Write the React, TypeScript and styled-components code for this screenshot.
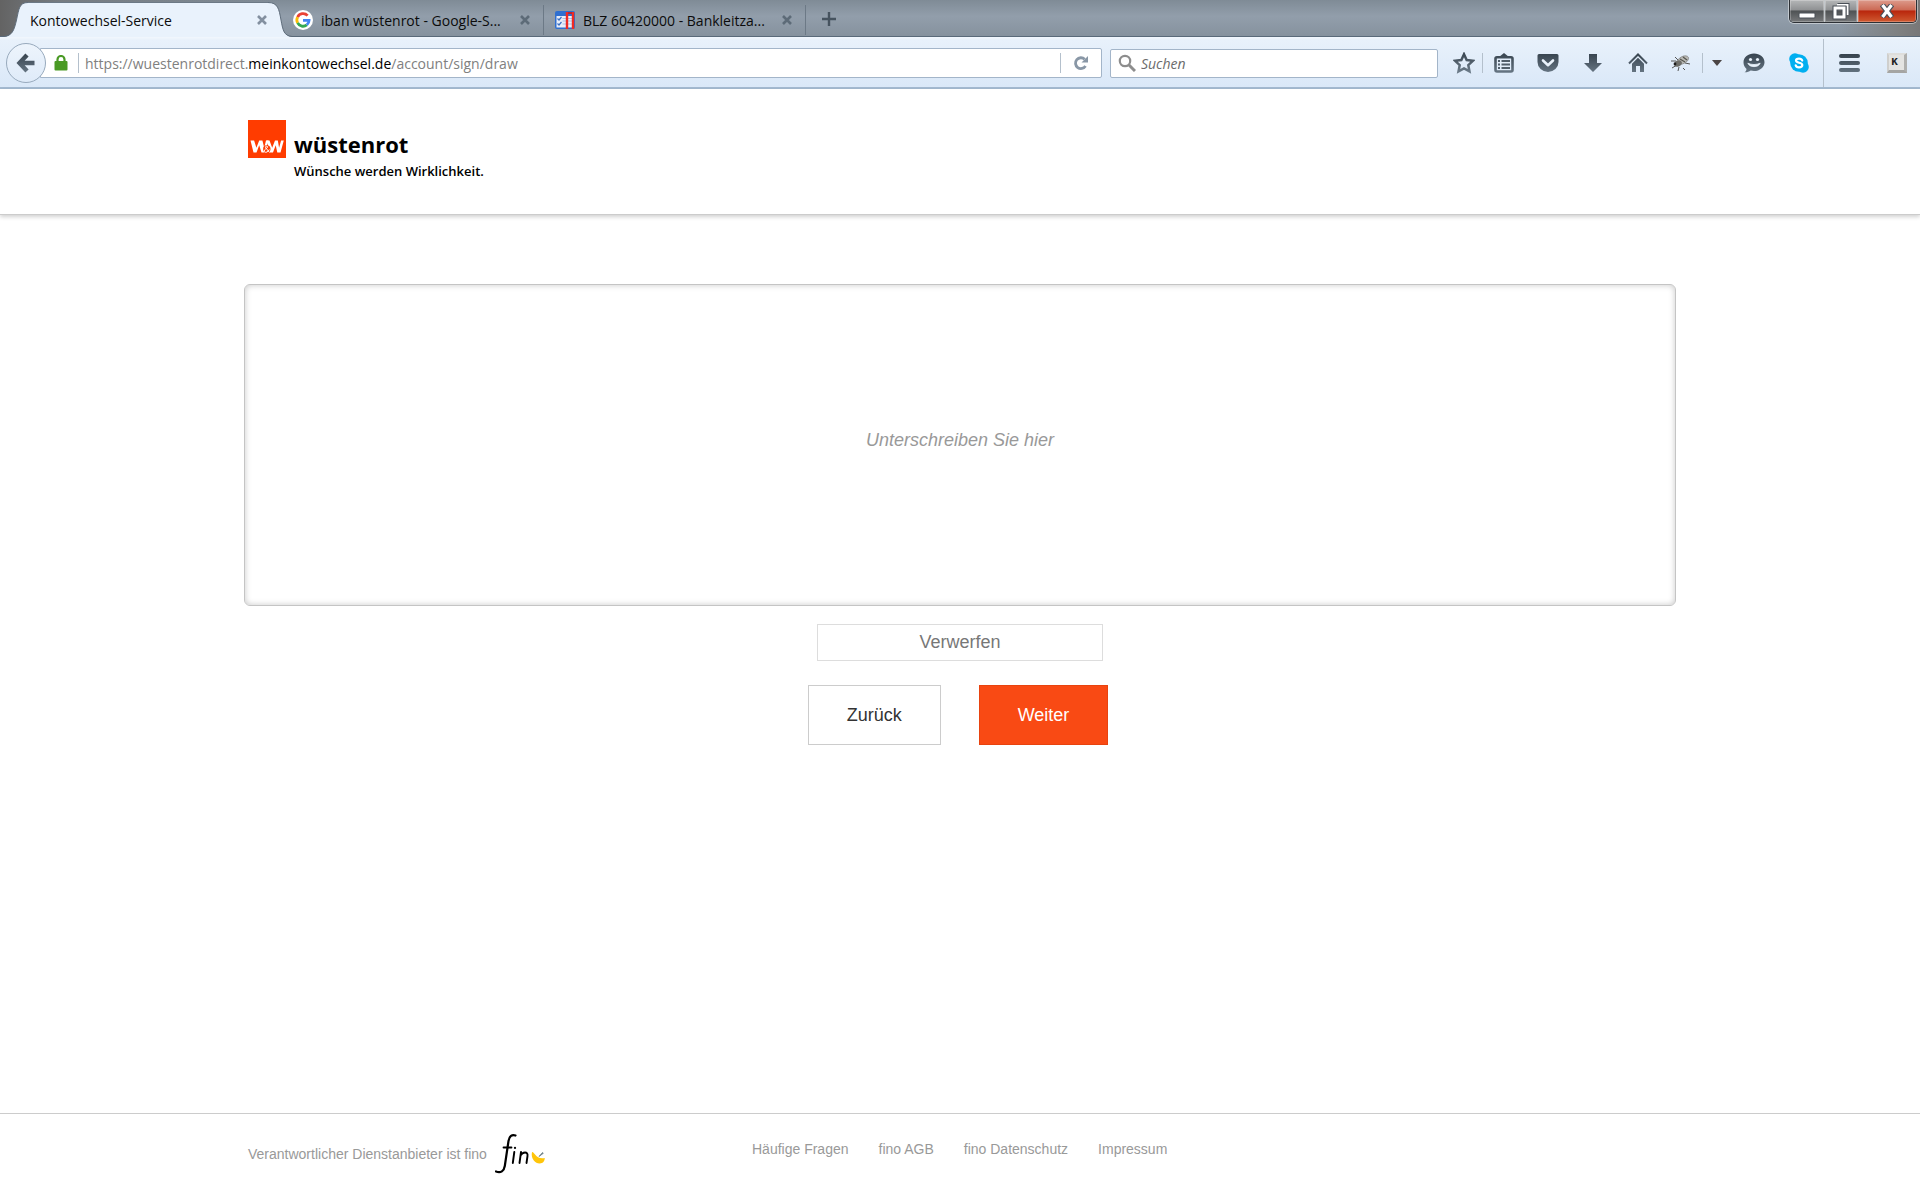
import React from "react";
import styled, { createGlobalStyle } from "styled-components";

const ui = `"Open Sans", "Noto Sans", sans-serif`;
const arial = `"Liberation Sans", Arial, sans-serif`;

const GlobalStyle = createGlobalStyle`
  *, *::before, *::after { box-sizing: border-box; }
  body { margin: 0; background: #fff; font-family: ${arial}; }
  button { font-family: inherit; cursor: pointer; }
`;

const Screen = styled.div`
  display: flex;
  flex-direction: column;
  min-height: 100vh;
`;

/* ---------- browser chrome ---------- */

const TabStrip = styled.div`
  display: flex;
  align-items: flex-end;
  height: 37px;
  padding-left: 4px;
  border-bottom: 1px solid #5a6a7a;
  background:
    linear-gradient(90deg, #636363 0, rgba(110, 112, 114, 0.6) 60px, transparent 280px),
    linear-gradient(270deg, #787777 0, #7f8080 20px, transparent 80px),
    linear-gradient(#7f8b96, #929eab 45%, #86929e);
`;

const Tab = styled.div`
  display: flex;
  flex: 0 1 262px;
  align-items: center;
  gap: 8px;
  min-width: 0;
  height: 30px;
  margin-bottom: 1px;
  padding: 0 12px 0 11px;
  border-right: 1px solid #6c7986;
`;

const ActiveTab = styled.div`
  position: relative;
  z-index: 1;
  display: flex;
  flex: 0 1 288px;
  height: 35px;
  margin: 0 -10px -1px 0;
`;

const TabEdge = styled.svg`
  flex: none;
  width: 24px;
  height: 35px;
`;

const TabBody = styled.div`
  display: flex;
  flex: 1;
  align-items: center;
  min-width: 0;
  padding-left: 2px;
  border-top: 1px solid #6c7986;
  background: #e9f2fc;
`;

const TabTitle = styled.span`
  flex: 1;
  overflow: hidden;
  padding-top: 2px;
  color: #0b0b0b;
  font: 14px/20px ${ui};
  text-overflow: ellipsis;
  white-space: nowrap;
`;

const PlainButton = styled.button`
  display: flex;
  flex: none;
  align-items: center;
  justify-content: center;
  padding: 0;
  border: 0;
  background: none;
`;

const NewTab = styled(PlainButton)`
  width: 46px;
  height: 34px;
`;

const WindowControls = styled.div`
  display: flex;
  align-self: flex-start;
  height: 23px;
  margin: 0 3px 0 auto;
  overflow: hidden;
  border: 1px solid #2c3035;
  border-top: 0;
  border-radius: 0 0 5px 5px;
  box-shadow: 0 0 0 1px rgba(255, 255, 255, 0.45);
`;

const WindowButton = styled(PlainButton)<{ $w: number; $close?: boolean }>`
  width: ${(p) => p.$w}px;
  border-right: ${(p) => (p.$close ? "0" : "1px solid #c3c8cc")};
  background: ${(p) =>
    p.$close
      ? "linear-gradient(#dd9b8c, #cc6a55 45%, #b9260c 50%, #cf5a31)"
      : "linear-gradient(#b5b7b8, #8f9193 45%, #4f5254 50%, #77797b)"};
  box-shadow: inset 0 0 0 1px rgba(255, 255, 255, 0.25);
`;

const Toolbar = styled.div`
  display: flex;
  align-items: center;
  height: 52px;
  padding: 2px 0 0 6px;
  border-bottom: 2px solid #a4bad1;
  background: linear-gradient(#f2f7fd, #e8f1fb 3px, #dae8f8);
`;

const BackButton = styled(PlainButton)`
  z-index: 1;
  width: 40px;
  height: 40px;
  border: 1px solid #98aabd;
  border-radius: 50%;
  background: linear-gradient(#edf4fc, #dfebf9);
`;

const AddressBar = styled.div`
  display: flex;
  flex: 1;
  align-items: center;
  min-width: 0;
  height: 30px;
  margin-left: -6px;
  padding-left: 13px;
  border: 1px solid #a3b5c9;
  border-radius: 0 2px 2px 0;
  background: #fff;
`;

const Address = styled.div`
  flex: 1;
  overflow: hidden;
  padding: 1px 0 0 6px;
  color: #808080;
  font: 14px/20px ${ui};
  white-space: nowrap;
  outline: 0;
`;

const Domain = styled.span`
  color: #000;
`;

const Divider = styled.span<{ $h?: number; $left?: number }>`
  flex: none;
  width: 1px;
  height: ${(p) => p.$h ?? 20}px;
  margin-left: ${(p) => p.$left ?? 0}px;
  background: #b4c0cc;
`;

const SearchBox = styled.label`
  display: flex;
  flex: 0 1 328px;
  align-items: center;
  gap: 5px;
  height: 29px;
  margin: 0 7px 0 8px;
  padding: 0 7px;
  border: 1px solid #a3b5c9;
  border-radius: 2px;
  background: #fff;
`;

const SearchInput = styled.input`
  flex: 1;
  min-width: 0;
  padding: 1px 0 0;
  border: 0;
  outline: 0;
  background: none;
  font: 14px/20px ${ui};
  &::placeholder {
    color: #6b6b6b;
    font-style: italic;
    opacity: 1;
  }
`;

const ToolButton = styled(PlainButton)<{ $w?: number }>`
  width: ${(p) => p.$w ?? 45}px;
  height: 32px;
`;

/* ---------- page ---------- */

const Container = styled.div`
  width: 100%;
  max-width: 1432px;
  margin: 0 auto;
`;

const SiteHeader = styled.header`
  padding: 31px 0 32px;
  border-bottom: 1px solid #ccc;
  box-shadow: 0 2px 4px rgba(0, 0, 0, 0.18);
`;

const Brand = styled.a`
  display: inline-flex;
  gap: 8px;
  padding-left: 4px;
  color: #000;
  text-decoration: none;
`;

const BrandText = styled.span`
  display: flex;
  flex-direction: column;
  padding-top: 8px;
`;

const BrandName = styled.span`
  font: 700 22px/32px ${ui};
`;

const BrandClaim = styled.span`
  font: 600 13px/22px ${ui};
`;

const Main = styled.main`
  flex: 1;
  padding: 69px 0 40px;
`;

const SignForm = styled.form`
  display: flex;
  flex-direction: column;
  align-items: center;
`;

const SignaturePad = styled.div`
  display: flex;
  align-items: center;
  justify-content: center;
  width: 100%;
  height: 322px;
  padding-bottom: 10px;
  border: 1px solid #c4c4c4;
  border-radius: 6px;
  box-shadow: inset 0 0 6px rgba(0, 0, 0, 0.22);
  color: #999;
  font-size: 18px;
  font-style: italic;
`;

const DiscardButton = styled.button`
  width: 20%;
  height: 37px;
  margin: 18px 0 24px;
  padding: 0;
  border: 1px solid #ddd;
  background: #fff;
  color: #777;
  font-size: 18px;
`;

const Actions = styled.div`
  display: flex;
  gap: 38px;
  padding-right: 4px;
`;

const ActionButton = styled.button<{ $primary?: boolean }>`
  height: 60px;
  padding: 0 38px;
  border: 1px solid ${(p) => (p.$primary ? "#e8430f" : "#ccc")};
  background: ${(p) => (p.$primary ? "#f94a14" : "#fff")};
  color: ${(p) => (p.$primary ? "#fff" : "#333")};
  font-size: 18px;
`;

const SiteFooter = styled.footer`
  min-height: 87px;
  padding-top: 20px;
  border-top: 1px solid #ccc;
  color: #999;
  font-size: 14px;
  line-height: 20px;
`;

const FooterGrid = styled(Container)`
  display: grid;
  grid-template-columns: 504px 1fr;
  align-items: start;
  padding-left: 4px;
`;

const Provider = styled.div`
  display: flex;
  align-items: center;
  gap: 8px;
`;

const FooterNav = styled.nav`
  display: flex;
  gap: 30px;
  padding-top: 5px;
`;

const FooterLink = styled.a`
  color: inherit;
  text-decoration: none;
`;

/* ---------- drawings ---------- */

const CloseIcon = ({ color = "#5d6b78" }: { color?: string }) => (
  <svg width="12" height="12" viewBox="0 0 12 12" stroke={color} strokeWidth="2.6">
    <path d="M2 2l8 8M10 2l-8 8" />
  </svg>
);

const Shade = ({ id }: { id: string }) => (
  <defs>
    <linearGradient id={id} x1="0" y1="0" x2="0" y2="24" gradientUnits="userSpaceOnUse">
      <stop offset="0" stopColor="#36424d" />
      <stop offset="1" stopColor="#71818f" />
    </linearGradient>
  </defs>
);

const GoogleIcon = () => (
  <svg width="20" height="20" viewBox="0 0 20 20">
    <circle cx="10" cy="10" r="10" fill="#fff" />
    <g fill="none" strokeWidth="2.8">
      <path d="M14.6 5.6A6.1 6.1 0 0 0 4.6 7.1" stroke="#ea4335" />
      <path d="M4.6 7.1a6.1 6.1 0 0 0 0 5.8" stroke="#fbbc05" />
      <path d="M4.6 12.9a6.1 6.1 0 0 0 9.2 2" stroke="#34a853" />
      <path d="M13.8 14.9a6.1 6.1 0 0 0 2.3-4.6H10" stroke="#4285f4" />
    </g>
  </svg>
);

const BankIcon = () => (
  <svg width="20" height="20" viewBox="0 0 20 20">
    <rect x="0" y="1" width="20" height="18" rx="2" fill="#2f6fd0" />
    <rect x="1.5" y="6" width="17" height="11.5" fill="#e9eef8" />
    <path d="M2.500 8.500l1.500 1.500L6.500 7M2.500 13.500l1.500 1.500L6.500 12" fill="none" stroke="#3b6fc2" strokeWidth="1.2" />
    <path d="M7.500 8.500H17M7.500 11H17M7.500 14H17" stroke="#a9c0e6" strokeWidth="1.2" />
    <path d="M12 2v17M18 2v17" stroke="#f02a22" strokeWidth="2.4" />
    <path d="M13 3h4" stroke="#b92535" strokeWidth="2" />
  </svg>
);

const ReloadIcon = () => (
  <svg width="16" height="16" viewBox="0 0 16 16">
    <path d="M12.5 11A5.4 5.4 0 1 1 11.7 4.3" fill="none" stroke="#8997a6" strokeWidth="2.8" />
    <path d="M15 1v6.5H8.5z" fill="#8997a6" />
  </svg>
);

const StarIcon = () => (
  <svg width="22" height="22" viewBox="0 0 24 24">
    <Shade id="star" />
    <path d="M12 2.5l2.9 6.3 6.8.8-5 4.7 1.3 6.9-6-3.4-6 3.4 1.3-6.9-5-4.7 6.8-.8z" fill="none" stroke="url(#star)" strokeWidth="2.7" />
  </svg>
);

const ListIcon = () => (
  <svg width="20" height="20" viewBox="0 0 20 20">
    <Shade id="list" />
    <path d="M5 4L10 0l5 4z" fill="url(#list)" />
    <rect x="1.5" y="4.3" width="17" height="14.2" rx="1.5" fill="none" stroke="url(#list)" strokeWidth="2.6" />
    <path d="M7.5 8H16M7.5 11.5H16M7.5 15H16M4 8h2M4 11.5h2M4 15h2" stroke="#4f5d6a" strokeWidth="1.9" />
  </svg>
);

const PocketIcon = () => (
  <svg width="22" height="20" viewBox="0 0 22 20">
    <Shade id="pocket" />
    <path d="M2 1h18a1.5 1.5 0 0 1 1.5 1.5V9a10.5 10 0 0 1-21 0V2.5A1.5 1.5 0 0 1 2 1z" fill="url(#pocket)" />
    <path d="M6 7.500l5 4.700 5-4.700" fill="none" stroke="#eaf2fb" strokeWidth="2.6" strokeLinecap="round" strokeLinejoin="round" />
  </svg>
);

const DownIcon = () => (
  <svg width="20" height="20" viewBox="0 0 20 20">
    <Shade id="down" />
    <path d="M6 1h8v9h5l-9 9-9-9h5z" fill="url(#down)" />
  </svg>
);

const HomeIcon = () => (
  <svg width="20" height="20" viewBox="0 0 20 20">
    <Shade id="home" />
    <path d="M1 10.5l9-9 9 9" fill="none" stroke="url(#home)" strokeWidth="2" />
    <path d="M4 10.7l6-6 6 6V19h-4v-6H8v6H4z" fill="url(#home)" />
  </svg>
);

const FlyIcon = () => (
  <svg width="20" height="18" viewBox="0 0 20 18">
    <path d="M0 7h5M1 14l5-3M7 17l1-4M12 14l2 2M14 9l5 1M4 3l4 4" stroke="#555" strokeWidth="1" />
    <ellipse cx="12" cy="6" rx="6" ry="3.5" transform="rotate(-28 12 6)" fill="#b9b9b5" stroke="#777" strokeWidth=".6" />
    <ellipse cx="7" cy="9.5" rx="4" ry="3" transform="rotate(-25 7 9.5)" fill="#6d6d68" />
    <path d="M9 5l5 3M12 3l4 3" stroke="#55554f" strokeWidth="1.2" />
    <circle cx="4" cy="10" r="1.4" fill="#1d1d1d" />
  </svg>
);

const ChatIcon = () => (
  <svg width="22" height="20" viewBox="0 0 22 20">
    <Shade id="chat" />
    <path d="M11 .5c5.8 0 10.5 3.7 10.5 8.7S16.8 18 11 18c-1.2 0-2.3-.1-3.3-.4C6 19 3.5 19.5 1.5 19.3c1.2-.8 1.9-2 2-3.4C1.6 14.2.5 11.9.5 9.2.5 4.2 5.2.5 11 .5z" fill="url(#chat)" />
    <circle cx="7.5" cy="6.5" r="1.6" fill="#eaf2fb" />
    <circle cx="14.5" cy="6.5" r="1.6" fill="#eaf2fb" />
    <path d="M4.8 10.2a6.4 4.6 0 0 0 12.4 0c-3.6 1.8-8.8 1.8-12.4 0z" fill="#eaf2fb" stroke="#eaf2fb" strokeWidth=".8" strokeLinejoin="round" />
  </svg>
);

const SkypeIcon = () => (
  <svg width="20" height="20" viewBox="0 0 20 20">
    <circle cx="6" cy="6" r="5.8" fill="#00aff0" />
    <circle cx="14" cy="14" r="5.8" fill="#00aff0" />
    <circle cx="10" cy="10" r="8.8" fill="#00aff0" />
    <path d="M13.2 7.5C12.700 6.100 11.700 5.600 10 5.600c-1.800 0-3 .7-3 2 0 2.900 6.300 1.500 6.300 4.500 0 1.500-1.400 2.300-3.300 2.300-1.800 0-3-.7-3.300-2.100" fill="none" stroke="#fff" strokeWidth="2.2" strokeLinecap="round" />
  </svg>
);

const MenuIcon = () => (
  <svg width="21" height="18" viewBox="0 0 21 18">
    <Shade id="menu" />
    <g fill="url(#menu)">
      <rect y="0" width="21" height="4" rx="2" />
      <rect y="7" width="21" height="4" rx="2" />
      <rect y="14" width="21" height="4" rx="2" />
    </g>
  </svg>
);

const KeyCap = styled.span`
  display: block;
  width: 20px;
  height: 20px;
  padding-right: 4px;
  border: 2px solid;
  border-color: #dededc #b0b0ae #a5a5a3 #cfcfcd;
  border-right-width: 3px;
  border-bottom-width: 3px;
  background: #e4e4e2;
  color: #222;
  font: 700 11px/14px "Liberation Mono", monospace;
`;

const WWLogo = () => (
  <svg width="38" height="38" viewBox="0 0 38 38">
    <rect width="38" height="38" fill="#ff3c00" />
    <g fill="#fff">
      <path d="M2.500 20.500h3.600l2.300 7.200 2.800-7.200h3.200l1.800 7.200 1.800-7.200h2.500L16.500 32.500h-3l-2.300-7.300-2.700 7.300h-3z" />
      <path d="M18.500 20.500h3l2.700 7.200 2.800-7.200h2.800l1.300 7.200 2-7.200h2.700L32.500 32.500h-3.200l-1.600-7.300-2.700 7.300h-3z" />
    </g>
    <circle cx="18.800" cy="29" r="3.700" fill="#ff3c00" />
    <path d="M21.500 32.500l-4-5c-.8-1.300 2.700-2 2-.2-.4 1-3.200 1.900-3.200 3.600 0 2.200 3.700 1.800 5-1.400" fill="none" stroke="#fff" strokeWidth="1" />
  </svg>
);

const FinoLogo = () => (
  <svg width="50" height="40" viewBox="0 0 50 40" role="img" aria-label="fino">
    <g fill="none" stroke="#000" strokeLinecap="round">
      <path d="M20.500 1.500C17 .3 14.300 2 13.500 7L9.800 32c-.8 5-4 7.300-8.800 5.500" strokeWidth="2.2" />
      <path d="M8.500 13.500h8" strokeWidth="1.8" />
      <path d="M19.300 18L17.800 29M26 18l-1.500 11M25.500 21.500c2-3.700 7.800-4.500 7 .5l-1 7" strokeWidth="1.9" />
      <path d="M20 13.800v.1" strokeWidth="2.2" />
    </g>
    <path d="M37 18c3 0 3.300 7.500 12.800 6-.2 2.500-1 4-2.300 4.800-3.200 1.300-6.500.5-8.700-2.300-1.600-2-2.600-5-1.800-8.500z" fill="#ffc50a" />
    <path d="M44 22.500l3.500-4 .8.800z" fill="#6b7f86" stroke="#6b7f86" strokeWidth=".8" />
  </svg>
);

/* ---------- data ---------- */

const backgroundTabs = [
  { title: "iban wüstenrot - Google-S...", icon: <GoogleIcon /> },
  { title: "BLZ 60420000 - Bankleitza...", icon: <BankIcon /> },
];

const footerLinks = ["Häufige Fragen", "fino AGB", "fino Datenschutz", "Impressum"];

const BrowserTabs = () => (
  <TabStrip>
    <ActiveTab>
      <TabEdge viewBox="0 0 24 35">
        <path d="M0 35C8 34 10 29 12.500 18S15 .5 24 .5V35z" fill="#e9f2fc" />
        <path d="M0 34.500C8 33.500 10 29 12.500 18S15 .5 24 .5" fill="none" stroke="#5f6d7b" />
      </TabEdge>
      <TabBody>
        <TabTitle>Kontowechsel-Service</TabTitle>
        <PlainButton aria-label="Tab schließen">
          <CloseIcon color="#8390a0" />
        </PlainButton>
      </TabBody>
      <TabEdge viewBox="0 0 24 35">
        <path d="M24 35C16 34 15 29 13 18S10 .5 0 .5V35z" fill="#e9f2fc" />
        <path d="M24 34.500C16 33.500 15 29 13 18S10 .5 0 .5" fill="none" stroke="#5f6d7b" />
      </TabEdge>
    </ActiveTab>
    {backgroundTabs.map((tab) => (
      <Tab key={tab.title}>
        {tab.icon}
        <TabTitle>{tab.title}</TabTitle>
        <PlainButton aria-label="Tab schließen">
          <CloseIcon />
        </PlainButton>
      </Tab>
    ))}
    <NewTab aria-label="Neuer Tab">
      <svg width="14" height="14" viewBox="0 0 14 14" stroke="#46535f" strokeWidth="2.4">
        <path d="M7 0v14M0 7h14" />
      </svg>
    </NewTab>
    <WindowControls>
      <WindowButton $w={35} aria-label="Minimieren">
        <svg width="18" height="20" viewBox="0 0 18 20">
          <rect x="1" y="12" width="16" height="5" rx="1" fill="#fff" stroke="#4a5058" />
        </svg>
      </WindowButton>
      <WindowButton $w={33} aria-label="Wiederherstellen">
        <svg width="18" height="18" viewBox="0 0 18 18" fill="none">
          <path d="M5.500 3h10v10" stroke="#4a5058" strokeWidth="4" />
          <path d="M5 3h10.500v10" stroke="#fff" strokeWidth="2" />
          <rect x="3" y="6" width="9" height="9" stroke="#4a5058" strokeWidth="5" />
          <rect x="3" y="6" width="9" height="9" stroke="#fff" strokeWidth="3" />
        </svg>
      </WindowButton>
      <WindowButton $w={58} $close aria-label="Schließen">
        <svg width="16" height="14" viewBox="0 0 16 14">
          <path d="M3 .5l10 13M13 .5l-10 13" stroke="#4a5058" strokeWidth="5.500" />
          <path d="M3.500 1l9 12M12.500 1l-9 12" stroke="#fff" strokeWidth="3.2" />
        </svg>
      </WindowButton>
    </WindowControls>
  </TabStrip>
);

const BrowserToolbar = () => (
  <Toolbar>
    <BackButton aria-label="Zurück">
      <svg width="20" height="20" viewBox="0 0 20 20" fill="none">
        <Shade id="back" />
        <path d="M11 2L3.500 10l7.500 8M4 10h14.500" stroke="url(#back)" strokeWidth="4.4" />
      </svg>
    </BackButton>
    <AddressBar>
      <svg width="14" height="16" viewBox="0 0 14 16">
        <path d="M3.500 8V4.500a3.500 3.500 0 0 1 7 0V8" fill="none" stroke="#4a9a24" strokeWidth="2.2" />
        <rect x=".5" y="6" width="13" height="9.500" rx="1" fill="#4a9a24" />
      </svg>
      <Divider $left={10} />
      <Address role="textbox" aria-label="Adresse" contentEditable suppressContentEditableWarning spellCheck={false}>
        https://wuestenrotdirect.<Domain>meinkontowechsel.de</Domain>/account/sign/draw
      </Address>
      <Divider />
      <ToolButton $w={40} aria-label="Neu laden">
        <ReloadIcon />
      </ToolButton>
    </AddressBar>
    <SearchBox>
      <svg width="18" height="18" viewBox="0 0 18 18" fill="none" stroke="#8d8d8d">
        <circle cx="7" cy="7" r="5.2" strokeWidth="2.2" />
        <path d="M11 11l6 6" strokeWidth="3" />
      </svg>
      <SearchInput type="text" placeholder="Suchen" aria-label="Suchen" />
    </SearchBox>
    <ToolButton $w={37} aria-label="Lesezeichen">
      <StarIcon />
    </ToolButton>
    <Divider />
    <ToolButton $w={42} aria-label="Lesezeichen anzeigen">
      <ListIcon />
    </ToolButton>
    <ToolButton aria-label="Pocket">
      <PocketIcon />
    </ToolButton>
    <ToolButton aria-label="Downloads">
      <DownIcon />
    </ToolButton>
    <ToolButton aria-label="Startseite">
      <HomeIcon />
    </ToolButton>
    <ToolButton $w={42} aria-label="Firebug">
      <FlyIcon />
    </ToolButton>
    <Divider />
    <ToolButton $w={28} aria-label="Weitere Optionen">
      <svg width="10" height="6" viewBox="0 0 10 6">
        <path d="M0 0h10L5 6z" fill="#4b4545" />
      </svg>
    </ToolButton>
    <ToolButton aria-label="Hello">
      <ChatIcon />
    </ToolButton>
    <ToolButton aria-label="Skype">
      <SkypeIcon />
    </ToolButton>
    <Divider $h={48} $left={2} />
    <ToolButton $w={50} aria-label="Menü">
      <MenuIcon />
    </ToolButton>
    <ToolButton $w={46} aria-label="Tastatur">
      <KeyCap>K</KeyCap>
    </ToolButton>
  </Toolbar>
);

export default function App() {
  return (
    <Screen>
      <GlobalStyle />
      <BrowserTabs />
      <BrowserToolbar />
      <SiteHeader>
        <Container>
          <Brand href="#">
            <WWLogo />
            <BrandText>
              <BrandName>wüstenrot</BrandName>
              <BrandClaim>Wünsche werden Wirklichkeit.</BrandClaim>
            </BrandText>
          </Brand>
        </Container>
      </SiteHeader>
      <Main>
        <Container>
          <SignForm onSubmit={(e) => e.preventDefault()}>
            <SignaturePad>Unterschreiben Sie hier</SignaturePad>
            <DiscardButton type="reset">Verwerfen</DiscardButton>
            <Actions>
              <ActionButton type="button">Zurück</ActionButton>
              <ActionButton type="submit" $primary>
                Weiter
              </ActionButton>
            </Actions>
          </SignForm>
        </Container>
      </Main>
      <SiteFooter>
        <FooterGrid>
          <Provider>
            <span>Verantwortlicher Dienstanbieter ist fino</span>
            <FinoLogo />
          </Provider>
          <FooterNav>
            {footerLinks.map((label) => (
              <FooterLink href="#" key={label}>
                {label}
              </FooterLink>
            ))}
          </FooterNav>
        </FooterGrid>
      </SiteFooter>
    </Screen>
  );
}
